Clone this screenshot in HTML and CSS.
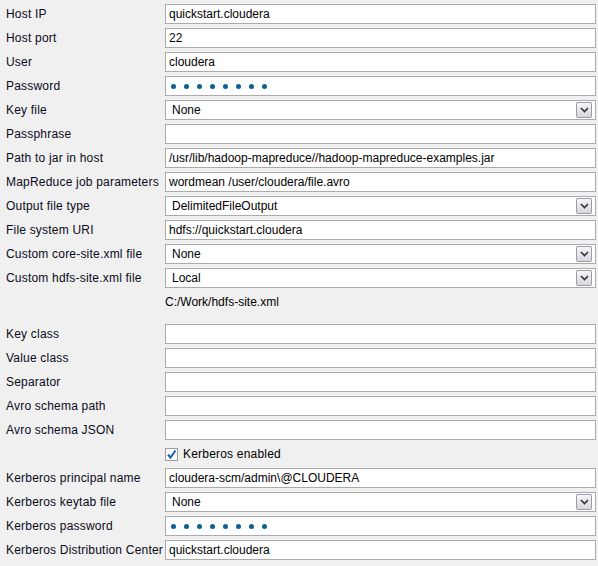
FILE: index.html
```html
<!DOCTYPE html>
<html lang="en">
<head>
  <meta charset="UTF-8" />
  <title>Connection settings</title>
  <link rel="stylesheet" href="styles.css">
</head>
<body>
  <div class="form">
    <div class="row"><div class="label">Host IP</div><div class="field">quickstart.cloudera</div></div>
    <div class="row"><div class="label">Host port</div><div class="field">22</div></div>
    <div class="row"><div class="label">User</div><div class="field">cloudera</div></div>
    <div class="row"><div class="label">Password</div><div class="field pass"><i></i><i></i><i></i><i></i><i></i><i></i><i></i><i></i></div></div>
    <div class="row"><div class="label">Key file</div><div class="field combo"><span>None</span><b class="arrow"><svg width="9" height="6" viewBox="0 0 9 6"><path d="M1 1 L4.5 4.5 L8 1" fill="none" stroke="#333" stroke-width="1.6"/></svg></b></div></div>
    <div class="row"><div class="label">Passphrase</div><div class="field"></div></div>
    <div class="row"><div class="label">Path to jar in host</div><div class="field">/usr/lib/hadoop-mapreduce//hadoop-mapreduce-examples.jar</div></div>
    <div class="row"><div class="label">MapReduce job parameters</div><div class="field">wordmean /user/cloudera/file.avro</div></div>
    <div class="row"><div class="label">Output file type</div><div class="field combo"><span>DelimitedFileOutput</span><b class="arrow"><svg width="9" height="6" viewBox="0 0 9 6"><path d="M1 1 L4.5 4.5 L8 1" fill="none" stroke="#333" stroke-width="1.6"/></svg></b></div></div>
    <div class="row"><div class="label">File system URI</div><div class="field">hdfs://quickstart.cloudera</div></div>
    <div class="row"><div class="label">Custom core-site.xml file</div><div class="field combo"><span>None</span><b class="arrow"><svg width="9" height="6" viewBox="0 0 9 6"><path d="M1 1 L4.5 4.5 L8 1" fill="none" stroke="#333" stroke-width="1.6"/></svg></b></div></div>
    <div class="row"><div class="label">Custom hdfs-site.xml file</div><div class="field combo"><span>Local</span><b class="arrow"><svg width="9" height="6" viewBox="0 0 9 6"><path d="M1 1 L4.5 4.5 L8 1" fill="none" stroke="#333" stroke-width="1.6"/></svg></b></div></div>
    <div class="row"><div class="label"></div><div class="plain">C:/Work/hdfs-site.xml</div></div>
    <div class="row gap"><div class="label">Key class</div><div class="field"></div></div>
    <div class="row"><div class="label">Value class</div><div class="field"></div></div>
    <div class="row"><div class="label">Separator</div><div class="field"></div></div>
    <div class="row"><div class="label">Avro schema path</div><div class="field"></div></div>
    <div class="row"><div class="label">Avro schema JSON</div><div class="field"></div></div>
    <div class="row"><div class="label"></div><div class="check"><span class="box"><svg width="11" height="11" viewBox="0 0 11 11"><path d="M2 5.5 L4.5 8.5 L9.5 1.5" fill="none" stroke="#1c5fa8" stroke-width="2"/></svg></span>Kerberos enabled</div></div>
    <div class="row"><div class="label">Kerberos principal name</div><div class="field">cloudera-scm/admin\@CLOUDERA</div></div>
    <div class="row"><div class="label">Kerberos keytab file</div><div class="field combo"><span>None</span><b class="arrow"><svg width="9" height="6" viewBox="0 0 9 6"><path d="M1 1 L4.5 4.5 L8 1" fill="none" stroke="#333" stroke-width="1.6"/></svg></b></div></div>
    <div class="row"><div class="label">Kerberos password</div><div class="field pass"><i></i><i></i><i></i><i></i><i></i><i></i><i></i><i></i></div></div>
    <div class="row"><div class="label">Kerberos Distribution Center</div><div class="field">quickstart.cloudera</div></div>
  </div>
</body>
</html>
```

FILE: styles.css
```css
* {
  margin: 0;
  padding: 0;
  box-sizing: border-box;
}

body {
  background: #f0f0f0;
  font-family: "Liberation Sans", Arial, sans-serif;
  font-size: 12px;
  color: #000;
}

.form {
  display: flex;
  flex-direction: column;
  gap: 4px;
  padding: 4px 2px 0 0;
}

.row {
  display: flex;
  height: 20px;
  align-items: center;
}

.row.gap {
  margin-top: 8px;
}

.label {
  width: 165px;
  flex: none;
  padding-left: 6px;
  color: #0a0a1a;
  letter-spacing: 0.2px;
  white-space: nowrap;
}

.field {
  flex: 1;
  height: 20px;
  border: 1px solid #ababab;
  background: #fff;
  padding-left: 3px;
  line-height: 18px;
  white-space: nowrap;
  overflow: hidden;
}

.combo {
  display: flex;
  align-items: center;
  justify-content: space-between;
  padding-left: 6px;
  padding-right: 3px;
}

.arrow {
  width: 16px;
  height: 16px;
  border: 1px solid #9a9aa8;
  border-radius: 2px;
  background: linear-gradient(to bottom, #f6f6f8, #d6d6de);
  display: flex;
  align-items: center;
  justify-content: center;
}

.pass {
  display: flex;
  align-items: center;
  gap: 8px;
  padding-left: 5px;
}

.pass i {
  width: 5px;
  height: 5px;
  border-radius: 50%;
  background: #0d5f8f;
}

.check {
  display: flex;
  align-items: center;
  gap: 5px;
  letter-spacing: 0.2px;
}

.check .box {
  width: 13px;
  height: 13px;
  border: 1px solid #9a9aa0;
  background: #fff;
  display: flex;
  align-items: center;
  justify-content: center;
}
```
